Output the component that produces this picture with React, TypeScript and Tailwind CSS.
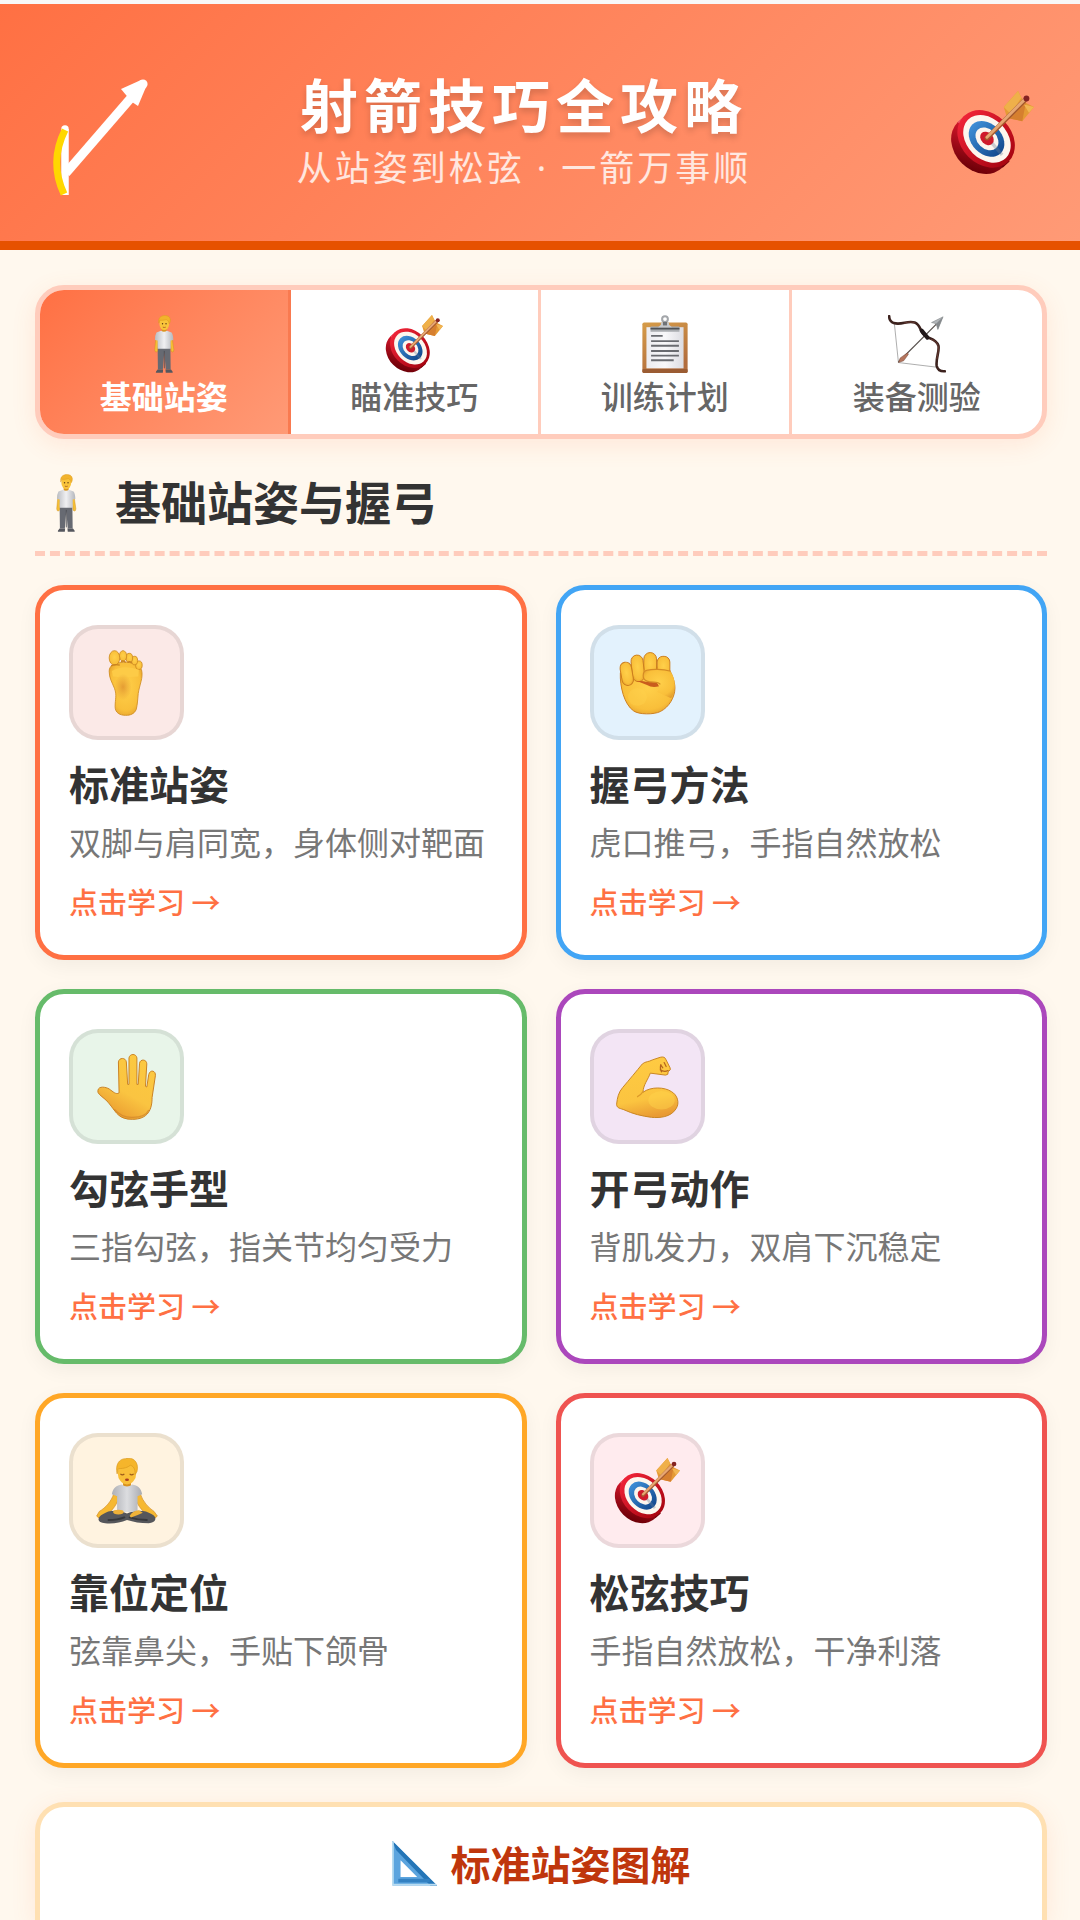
import { useState } from "react";
import type { ComponentType } from "react";

type IconProps = { className: string };

function Target({ className }: IconProps) {
  return (
    <svg viewBox="0 0 100 100" className={className} aria-hidden="true">
      <defs>
        <linearGradient id="rim" x1="0" y1="0" x2="0.6" y2="1">
          <stop offset="0" stopColor="#f0707a" />
          <stop offset="0.35" stopColor="#d4162a" />
          <stop offset="1" stopColor="#6f0008" />
        </linearGradient>
        <linearGradient id="face" x1="0" y1="0" x2="1" y2="0">
          <stop offset="0" stopColor="#ee2337" />
          <stop offset="1" stopColor="#a80511" />
        </linearGradient>
        <linearGradient id="blue" x1="0" y1="0" x2="1" y2="0">
          <stop offset="0" stopColor="#3d8ed6" />
          <stop offset="1" stopColor="#144a8f" />
        </linearGradient>
      </defs>
      <ellipse cx="36" cy="64" rx="38" ry="31" transform="rotate(45 36 64)" fill="url(#rim)" />
      <path d="M17 30 L9 37 L63 91 L71 84 Z" fill="url(#rim)" />
      <ellipse cx="43" cy="57" rx="38" ry="30" transform="rotate(45 43 57)" fill="url(#face)" />
      <ellipse cx="44" cy="57" rx="32" ry="24" transform="rotate(45 44 57)" fill="#fdf6ee" />
      <ellipse cx="43.500" cy="57" rx="24" ry="18" transform="rotate(45 43.500 57)" fill="url(#blue)" />
      <ellipse cx="44" cy="57" rx="15.500" ry="11.500" transform="rotate(45 44 57)" fill="#fdf6ee" />
      <ellipse cx="44" cy="56.500" rx="9" ry="7" transform="rotate(45 44 56.500)" fill="#cf1b2c" />
      <path d="M50 62 L62 76" stroke="#6b7f96" strokeOpacity="0.35" strokeWidth="4" />
      <path d="M64 19 L81 0 L85 8 L90 14 L100 19 L86 36 L68 32 Z" fill="#e59a35" />
      <path d="M81 0 L85 8 L72 27 L64 19 Z" fill="#efb04a" />
      <path d="M86 36 L68 32 L91 10 Z" fill="#d67f2f" />
      <path d="M88 16 L100 19 L94 26 Z" fill="#f2b653" />
      <path d="M44 56 L89 11" stroke="#a4592e" strokeWidth="5.500" strokeLinecap="round" />
      <path d="M44 55 L89 10" stroke="#e6a672" strokeWidth="3.500" strokeLinecap="round" />
      <circle cx="91" cy="9" r="3.500" fill="#852222" />
    </svg>
  );
}

function Standing({ className }: IconProps) {
  return (
    <svg viewBox="0 0 100 100" className={className} aria-hidden="true">
      <defs>
        <linearGradient id="shirt" x1="0" y1="0" x2="1" y2="0">
          <stop offset="0" stopColor="#b9bcc2" />
          <stop offset="0.5" stopColor="#f0f0f2" />
          <stop offset="1" stopColor="#b4b7bd" />
        </linearGradient>
      </defs>
      <path d="M39 56 L61 56 L61.500 94 L53 94 L50.500 64 L48 94 L39.500 94 Z" fill="#676a72" />
      <path d="M50.500 62 L50.500 92" stroke="#4a4c53" strokeWidth="1.500" />
      <path d="M39 94 Q35 98 36 99.500 L48 99.500 L48.500 94 Z" fill="#55575e" />
      <path d="M62 94 Q66 98 65 99.500 L53 99.500 L52.500 94 Z" fill="#55575e" />
      <path d="M36 39 L34 60 Q34 64 37 64 Q39.500 63 39 58 L40 40 Z" fill="#f5bf35" stroke="#d18f1d" strokeWidth="0.800" />
      <path d="M64 39 L67 60 Q67 64 64 64 Q61.500 63 62 58 L60 40 Z" fill="#f5bf35" stroke="#d18f1d" strokeWidth="0.800" />
      <rect x="46" y="20" width="8.500" height="11" fill="#d9961f" />
      <path d="M45 27 L37 30 Q34.500 34 34.500 43 L39 44 L39 58 L61.500 58 L61.500 44 L66 43 Q66 34 63 30 L55 27 Q50 31 45 27 Z" fill="url(#shirt)" />
      <ellipse cx="50.500" cy="15" rx="8.500" ry="11" fill="#f9c43b" />
      <path d="M41 14 Q39 3 49 1 Q60 0 61 8 Q61 13 59 15 Q58 9 54 8 Q47 10 43 9 Z" fill="#f2b32c" stroke="#dc9a1f" strokeWidth="0.800" />
      <circle cx="47.500" cy="15" r="1.200" fill="#5b3a16" />
      <circle cx="53.500" cy="15" r="1.200" fill="#5b3a16" />
      <path d="M48 21 Q50.500 22 53 21" stroke="#ad5c22" strokeWidth="1.500" fill="none" />
    </svg>
  );
}

function Clipboard({ className }: IconProps) {
  return (
    <svg viewBox="0 0 100 100" className={className} aria-hidden="true">
      <defs>
        <linearGradient id="board" x1="0" y1="0" x2="0.4" y2="1">
          <stop offset="0" stopColor="#d69c48" />
          <stop offset="1" stopColor="#b26d3d" />
        </linearGradient>
        <linearGradient id="paper" x1="0" y1="0" x2="1" y2="0">
          <stop offset="0" stopColor="#ececf0" />
          <stop offset="0.5" stopColor="#f8f8fa" />
          <stop offset="1" stopColor="#dcdce1" />
        </linearGradient>
      </defs>
      <rect x="11" y="13" width="78" height="87" rx="3" fill="url(#board)" />
      <rect x="11" y="93" width="78" height="7" rx="2" fill="#9b5c33" />
      <rect x="18" y="21" width="64" height="71" fill="url(#paper)" />
      <rect x="25" y="20" width="50" height="9" rx="1" fill="#a9acb0" />
      <rect x="25" y="22" width="50" height="3" fill="#4f5256" />
      <path d="M43 13 L57 13 L57 17 L62 21 L38 21 L43 17 Z" fill="#c6c8cb" />
      <circle cx="50" cy="7" r="5" fill="none" stroke="#a3a6aa" strokeWidth="3.500" />
      <rect x="46.500" y="12" width="7" height="6" fill="#6f7276" />
      <g stroke="#696b70" strokeWidth="3.200">
        <path d="M26 36 H46" />
        <path d="M26 45 H74" />
        <path d="M26 53 H74" />
        <path d="M26 62 H74" />
        <path d="M26 70 H74" />
        <path d="M26 78 H65" />
      </g>
    </svg>
  );
}

function BowArrow({ className }: IconProps) {
  return (
    <svg viewBox="0 0 100 100" className={className} aria-hidden="true">
      <path d="M11 15 L18 82 L84 90" fill="none" stroke="#8b8b8b" strokeWidth="1.200" />
      <path d="M18 81 L86 13" stroke="#57504d" strokeWidth="2" />
      <path d="M18 82 L21 74 L34 65 L35 68 L27 79 Z" fill="#b4745c" stroke="#6c4437" strokeWidth="0.800" />
      <path d="M95 3 L75 13 L83 15 L86 25 Z" fill="#b1b5b8" stroke="#74787b" strokeWidth="0.800" />
      <path d="M95 3 L83 15 L86 25 Z" fill="#85898c" />
      <path d="M2 2 Q2 11 10 14 C24 18 33 9 46 13 C57 17 55 29 63 35 C70 42 82 39 87 53 C89 63 82 75 84 88 Q87 98 98 97" fill="none" stroke="#3c221e" strokeWidth="4.500" strokeLinecap="round" />
      <path d="M28 14 Q40 10 47 14 M74 42 Q84 44 87 55 Q87 66 84 76" fill="none" stroke="#754238" strokeWidth="1.300" />
      <path d="M58 27 L68 39" stroke="#21181a" strokeWidth="7" strokeLinecap="round" />
    </svg>
  );
}

function SkinGradient({ id }: { id: string }) {
  return (
    <radialGradient id={id} cx="0.5" cy="0.45" r="0.65">
      <stop offset="0" stopColor="#ffd04a" />
      <stop offset="0.7" stopColor="#f9bf3a" />
      <stop offset="1" stopColor="#e09a2a" />
    </radialGradient>
  );
}

function Foot({ className }: IconProps) {
  return (
    <svg viewBox="3 0 100 100" className={className} aria-hidden="true">
      <defs>
        <SkinGradient id="foot-skin" />
        <radialGradient id="foot-arch">
          <stop offset="0" stopColor="#e59d33" />
          <stop offset="1" stopColor="#e59d33" stopOpacity="0" />
        </radialGradient>
      </defs>
      <g fill="url(#foot-skin)" stroke="#cf8d22" strokeWidth="1.300">
        <path d="M26 32 C26 23 35 20 44 19 C54 17 70 20 75 30 C78 42 72 52 70 66 C69 76 69 82 67 90 C64 97 58 99 51 99 C42 99 35 95 35 86 C35 74 38 69 34 58 C30 48 26 43 26 32 Z" />
        <ellipse cx="71" cy="23" rx="5" ry="6.500" />
        <ellipse cx="64.500" cy="16" rx="4.600" ry="6.500" />
        <ellipse cx="56.500" cy="12" rx="5" ry="7" />
        <ellipse cx="47" cy="9" rx="5.500" ry="8" />
        <ellipse cx="34" cy="12" rx="8" ry="11" />
      </g>
      <path d="M30 32 Q48 21 71 30 L70 40 Q48 42 32 40 Z" fill="#fdcb47" />
      <ellipse cx="47" cy="56" rx="13" ry="20" fill="url(#foot-arch)" />
      <path d="M29 24 Q35 21 42 23 M44 18 Q47 15 51 19 M54 19 Q57 16 60 20" fill="none" stroke="#c98220" strokeWidth="2" />
    </svg>
  );
}

function Fist({ className }: IconProps) {
  return (
    <svg viewBox="-2 -2 104 104" className={className} aria-hidden="true">
      <defs>
        <SkinGradient id="fist-skin" />
      </defs>
      <g fill="url(#fist-skin)" stroke="#cb7c1d" strokeWidth="1.500">
        <path d="M8 34 C7 55 14 84 29 94 C37 100 61 100 71 95 C85 88 94 72 94 58 C94 46 88 35 86 30 L62 24 Z" />
        <rect x="66" y="8" width="20" height="34" rx="9" />
        <rect x="45" y="2" width="20" height="38" rx="10" />
        <rect x="26" y="6" width="19" height="42" rx="9.500" transform="rotate(-6 35 27)" />
        <rect x="9" y="17" width="18" height="37" rx="9" transform="rotate(-10 18 35)" />
      </g>
      <path d="M34 47 Q44 46 48 48 L66 49 L69 55 Q58 58 50 53 Z" fill="#c95d1d" />
      <path d="M46 30 C58 27 78 28 87 32 C96 44 96 62 88 74 L66 64 C72 55 68 50 62 49 L51 48 C43 46 42 35 46 30 Z" fill="url(#fist-skin)" />
      <path d="M86 31 C75 28 58 28 50 30 C42 32 42 44 50 47 C58 50 67 47 71 52" fill="none" stroke="#d58a25" strokeWidth="1.800" />
      <ellipse cx="35" cy="72" rx="15" ry="14" fill="#ffd34d" opacity="0.4" />
    </svg>
  );
}

function Hand({ className }: IconProps) {
  return (
    <svg viewBox="0 0 100 100" className={className} aria-hidden="true">
      <defs>
        <linearGradient id="hand-skin" x1="0.8" y1="0" x2="0.3" y2="1">
          <stop offset="0" stopColor="#fcc940" />
          <stop offset="0.6" stopColor="#fac441" />
          <stop offset="1" stopColor="#e9992f" />
        </linearGradient>
      </defs>
      <path d="M6 55 C7 48 18 50 23 53 C29 57 33 62 38 59 L37 12 C38 5 48 5 49 12 L51 46 L53 46 L53 6 C54 -1 64 -1 65 6 L65 46 L67 46 L69 14 C70 7 80 8 80 15 L78 49 L80 50 L83 31 C85 23 94 25 93 33 L88 66 C88 84 82 99 58 99 C38 99 34 89 26 79 C20 70 13 66 8 61 Q5 58 6 55 Z" fill="url(#hand-skin)" stroke="#c98223" strokeWidth="1.500" strokeLinejoin="round" />
      <path d="M31 84 Q42 97 59 96 Q78 96 83 85" fill="none" stroke="#cc7e28" strokeWidth="2" opacity="0.6" />
    </svg>
  );
}

function Biceps({ className }: IconProps) {
  return (
    <svg viewBox="0 0 100 100" className={className} aria-hidden="true">
      <defs>
        <linearGradient id="arm-skin" x1="0.3" y1="0" x2="0.5" y2="1">
          <stop offset="0" stopColor="#ffcb42" />
          <stop offset="0.7" stopColor="#fbc440" />
          <stop offset="1" stopColor="#e99a33" />
        </linearGradient>
      </defs>
      <path d="M4 76 C5 66 7 58 13 51 C24 38 34 26 43 15 C48 11 53 12 58 9 L70 5 Q77 3 79 9 L85 21 Q87 24 82 27 Q83 32 78 32 L55 29 C52 38 44 47 44 58 C56 49 77 50 87 57 C96 62 100 74 94 83 C86 96 69 97 57 96 C42 94 29 91 14 84 C7 82 4 81 4 76 Z" fill="url(#arm-skin)" stroke="#c88623" strokeWidth="1.500" strokeLinejoin="round" />
      <ellipse cx="72" cy="70" rx="20" ry="14" fill="#ffd54c" opacity="0.45" />
      <path d="M44 57 Q40 63 35 65" fill="none" stroke="#dd9929" strokeWidth="1.800" />
      <path d="M71 17 L74 21 M76 13 L79 19 M70 24 Q76 28 82 25 M71 16 Q69 22 72 27" fill="none" stroke="#b5651c" strokeWidth="1.800" strokeLinecap="round" />
    </svg>
  );
}

function Meditating({ className }: IconProps) {
  return (
    <svg viewBox="0 0 100 100" className={className} aria-hidden="true">
      <defs>
        <linearGradient id="tee" x1="0" y1="0" x2="1" y2="0">
          <stop offset="0" stopColor="#adafb5" />
          <stop offset="0.5" stopColor="#dcdde0" />
          <stop offset="1" stopColor="#a9abb1" />
        </linearGradient>
      </defs>
      <path d="M30 54 C26 66 18 75 8 81 L4 88 Q7 93 13 90 C26 82 33 74 38 60 Z" fill="#f6b831" stroke="#cf8a1f" strokeWidth="1" />
      <path d="M70 54 C74 66 82 75 91 81 L96 88 Q93 93 87 90 C74 82 67 74 62 60 Z" fill="#f6b831" stroke="#cf8a1f" strokeWidth="1" />
      <path d="M14 85 C22 79 36 78 50 84 C64 78 78 79 87 85 C97 90 94 98 83 99 C70 99 60 97 50 94 C40 98 30 100 17 99 C4 98 4 90 14 85 Z" fill="#55565b" />
      <path d="M22 94 Q36 94 46 90 M54 90 Q66 94 80 94" fill="none" stroke="#37383c" strokeWidth="3" strokeLinecap="round" />
      <rect x="44" y="32" width="12" height="12" fill="#d9921f" />
      <path d="M42 40 C34 42 29 44 27 55 L35 58 L35 80 Q50 84 66 80 L66 58 L73 55 C71 44 66 42 58 40 Q50 46 42 40 Z" fill="url(#tee)" />
      <ellipse cx="37" cy="82" rx="8" ry="3.500" fill="#eeb038" />
      <path d="M54 88 Q58 80 68 79 L74 83 Q66 87 56 90 Z" fill="#efb238" />
      <ellipse cx="50" cy="23" rx="14" ry="17" fill="#f9bf38" />
      <path d="M35 24 C32 10 38 1 48 1 C58 -2 69 5 65 21 L62 25 C63 16 59 12 55 11 C49 16 41 16 37 16 Z" fill="#f5b52b" stroke="#d9971d" strokeWidth="1" />
      <path d="M40 24 Q43 27 46 24 M54 24 Q57 27 60 24" fill="none" stroke="#9c5b1b" strokeWidth="1.800" />
      <ellipse cx="50" cy="33" rx="3" ry="1.800" fill="#a93c20" />
    </svg>
  );
}

function SetSquare({ className }: IconProps) {
  return (
    <svg viewBox="0 0 100 100" className={className} aria-hidden="true">
      <path d="M1 0 L100 99 L1 99 Z M19 43 L19 80 L56 80 Z" fill="#5ba4de" fillRule="evenodd" />
      <path d="M1 0 L100 99 L85 99 L9 20 Z" fill="#2475b7" />
      <path d="M2 1 V97 H98" fill="none" stroke="#b8dcf1" strokeWidth="4" />
      <path d="M14 88 H84" stroke="#3381c2" strokeWidth="8" />
    </svg>
  );
}

function HeaderBow() {
  return (
    <svg viewBox="0 0 104 128" className="h-[128px] w-[104px] shrink-0 overflow-visible" aria-hidden="true">
      <path d="M19 64 V130" stroke="#fff" strokeWidth="7.500" />
      <circle cx="19" cy="64" r="3.700" fill="#fff" />
      <path d="M20 108 L97 19" stroke="#fff" strokeWidth="9" />
      <circle cx="97" cy="19" r="4.600" fill="#fff" />
      <path d="M75 24 L95 15 L100 22 L92 41 L86 37 L80 30 Z" fill="#fff" />
      <path d="M19 65 Q3 97 18 129" fill="none" stroke="#ffd700" strokeWidth="7" />
    </svg>
  );
}

const tabs: { label: string; Icon: ComponentType<IconProps> }[] = [
  { label: "基础站姿", Icon: Standing },
  { label: "瞄准技巧", Icon: Target },
  { label: "训练计划", Icon: Clipboard },
  { label: "装备测验", Icon: BowArrow },
];

const lessons: { title: string; text: string; Icon: ComponentType<IconProps>; border: string; tile: string }[] = [
  { title: "标准站姿", text: "双脚与肩同宽，身体侧对靶面", Icon: Foot, border: "border-[#ff7043]", tile: "bg-[#fbe9e7]" },
  { title: "握弓方法", text: "虎口推弓，手指自然放松", Icon: Fist, border: "border-[#42a5f5]", tile: "bg-[#e3f2fd]" },
  { title: "勾弦手型", text: "三指勾弦，指关节均匀受力", Icon: Hand, border: "border-[#66bb6a]", tile: "bg-[#e8f5e9]" },
  { title: "开弓动作", text: "背肌发力，双肩下沉稳定", Icon: Biceps, border: "border-[#ab47bc]", tile: "bg-[#f3e5f5]" },
  { title: "靠位定位", text: "弦靠鼻尖，手贴下颌骨", Icon: Meditating, border: "border-[#ffa726]", tile: "bg-[#fff3e0]" },
  { title: "松弦技巧", text: "手指自然放松，干净利落", Icon: Target, border: "border-[#ef5350]", tile: "bg-[#ffebee]" },
];

export default function App() {
  const [active, setActive] = useState(0);

  return (
    <div className="flex min-h-screen flex-col bg-[#fff8ee] font-['Noto_Sans_CJK_SC',sans-serif] text-[#333]">
      <div className="h-1 bg-[#f8f8f8]" />
      <header className="flex items-center border-b-[9px] border-[#e65100] bg-linear-135 from-[#ff7043] to-[#ff9a76] px-[46px] pt-[61px] pb-[48px] text-white">
        <HeaderBow />
        <div className="flex-1 pb-[3px] text-center">
          <h1 className="text-[58px] leading-[77px] font-bold tracking-[6px] [text-shadow:0_4px_6px_rgba(0,0,0,0.16)]">射箭技巧全攻略</h1>
          <p className="mt-[3px] font-['Noto_Sans','Noto_Sans_CJK_SC',sans-serif] text-[35px] leading-[45px] tracking-[3px] text-white/80">从站姿到松弦 · 一箭万事顺</p>
        </div>
        <div className="flex w-[136px] shrink-0 justify-end pt-2">
          <Target className="size-[84px]" />
        </div>
      </header>

      <main className="flex flex-1 flex-col pt-[35px] pr-[33px] pl-[35px]">
        <nav className="grid grid-cols-4 overflow-hidden rounded-[29px] border-[5px] border-[#ffccbc] bg-white shadow-[0_6px_24px_rgba(255,112,67,0.12)]">
          {tabs.map(({ label, Icon }, i) => (
            <button
              key={label}
              type="button"
              onClick={() => setActive(i)}
              className={
                (i === active
                  ? "border-[#f97a50] bg-linear-135 from-[#ff7043] to-[#ff9a76] font-bold text-white"
                  : "border-[#ffccbc] font-medium text-[#666]") +
                " flex flex-col items-center border-r-[3px] pt-[25px] pb-[18px] last:border-r-0"
              }
            >
              <Icon className="size-[58px]" />
              <span className="mt-px text-[32px] leading-[42px]">{label}</span>
            </button>
          ))}
        </nav>

        <div className="mt-[34px] flex items-center gap-[20px] border-b-[5px] border-dashed border-[#ffccbc] pb-[18px] pl-[2px]">
          <Standing className="size-[58px]" />
          <h2 className="pb-[6px] text-[46px] leading-[54px] font-bold">基础站姿与握弓</h2>
        </div>

        <div className="mt-[29px] grid grid-cols-2 gap-[29px]">
          {lessons.map(({ title, text, Icon, border, tile }) => (
            <article
              key={title}
              className={border + " rounded-[29px] border-[5px] bg-white px-[29px] pt-[35px] pb-[32px] shadow-[0_6px_20px_rgba(0,0,0,0.05)]"}
            >
              <div className={tile + " flex size-[115px] items-center justify-center rounded-[29px] border-4 border-black/8"}>
                <Icon className="size-[66px]" />
              </div>
              <h3 className="mt-[20px] text-[40px] leading-[46px] font-bold">{title}</h3>
              <p className="mt-[11px] text-[32px] leading-[48px] whitespace-nowrap text-[#777]">{text}</p>
              <a href="#learn" className="mt-[14px] block text-[29px] leading-[44px] font-medium text-[#ff7043]">
                点击学习 →
              </a>
            </article>
          ))}
        </div>

        <section className="mt-[34px] flex-1 rounded-t-[29px] border-[5px] border-b-0 border-[#ffe0b2] bg-white pt-[33px] shadow-[0_6px_24px_rgba(255,112,67,0.12)]">
          <h2 className="flex items-center justify-center gap-[14px] text-[40px] leading-[46px] font-bold text-[#bf360c]">
            <SetSquare className="size-[45px]" />
            标准站姿图解
          </h2>
        </section>
      </main>
    </div>
  );
}
